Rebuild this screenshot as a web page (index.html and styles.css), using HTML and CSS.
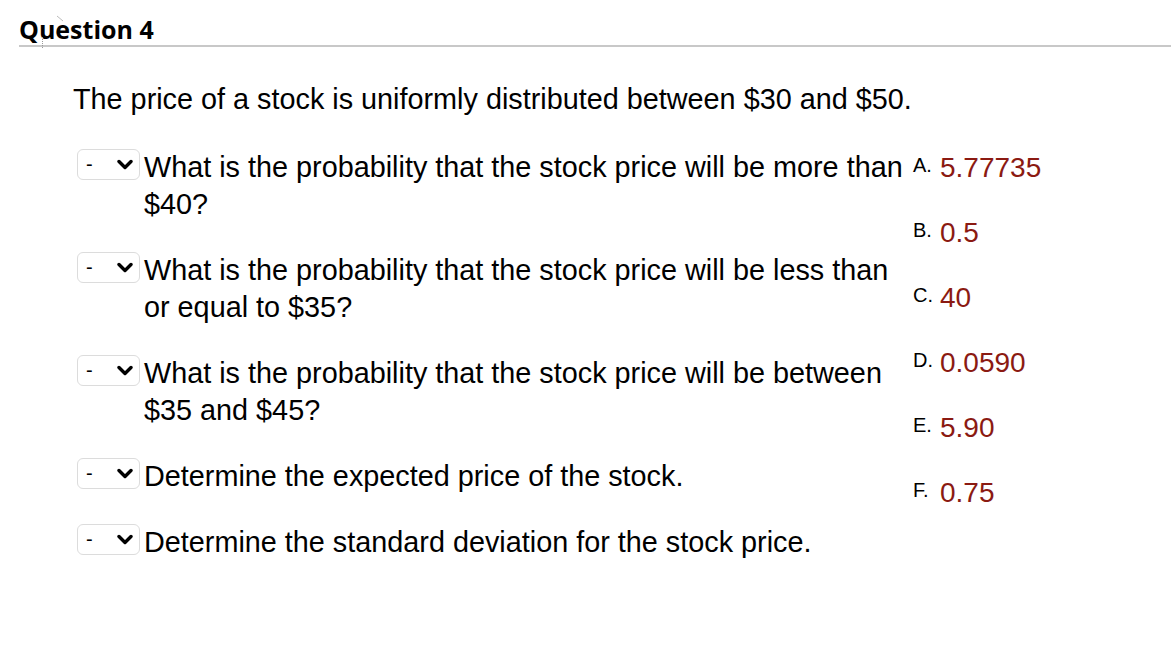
FILE: index.html
```html
<!DOCTYPE html>
<html>
<head>
<meta charset="utf-8">
<link rel="stylesheet" href="styles.css">
</head>
<body>
<div class="page">
  <h1 class="qtitle">Question 4<svg class="mark" width="30" height="34" viewBox="0 0 30 34"><line x1="16" y1="1" x2="22" y2="6" stroke="#bbb" stroke-width="1"/><line x1="1.5" y1="22" x2="1.5" y2="33" stroke="#999" stroke-width="1" stroke-dasharray="1,1"/></svg></h1>
  <div class="content">
    <p class="stem">The price of a stock is uniformly distributed between $30 and $50.</p>
    <div class="match">
      <div class="questions">
        <div class="qrow">
          <div class="sel"><span class="dash">-</span><svg class="chev" width="16" height="11" viewBox="0 0 16 11"><polyline points="2,2.5 8,8.5 14,2.5" fill="none" stroke="#000" stroke-width="3.4" stroke-linecap="round" stroke-linejoin="round"/></svg></div>
          <div class="qtext">What is the probability that the stock price will be more than $40?</div>
        </div>
        <div class="qrow">
          <div class="sel"><span class="dash">-</span><svg class="chev" width="16" height="11" viewBox="0 0 16 11"><polyline points="2,2.5 8,8.5 14,2.5" fill="none" stroke="#000" stroke-width="3.4" stroke-linecap="round" stroke-linejoin="round"/></svg></div>
          <div class="qtext">What is the probability that the stock price will be less than or equal to $35?</div>
        </div>
        <div class="qrow">
          <div class="sel"><span class="dash">-</span><svg class="chev" width="16" height="11" viewBox="0 0 16 11"><polyline points="2,2.5 8,8.5 14,2.5" fill="none" stroke="#000" stroke-width="3.4" stroke-linecap="round" stroke-linejoin="round"/></svg></div>
          <div class="qtext">What is the probability that the stock price will be between $35 and $45?</div>
        </div>
        <div class="qrow">
          <div class="sel"><span class="dash">-</span><svg class="chev" width="16" height="11" viewBox="0 0 16 11"><polyline points="2,2.5 8,8.5 14,2.5" fill="none" stroke="#000" stroke-width="3.4" stroke-linecap="round" stroke-linejoin="round"/></svg></div>
          <div class="qtext">Determine the expected price of the stock.</div>
        </div>
        <div class="qrow">
          <div class="sel"><span class="dash">-</span><svg class="chev" width="16" height="11" viewBox="0 0 16 11"><polyline points="2,2.5 8,8.5 14,2.5" fill="none" stroke="#000" stroke-width="3.4" stroke-linecap="round" stroke-linejoin="round"/></svg></div>
          <div class="qtext">Determine the standard deviation for the stock price.</div>
        </div>
      </div>
      <div class="options">
        <div class="opt"><span class="letter">A.</span><span class="val">5.77735</span></div>
        <div class="opt"><span class="letter">B.</span><span class="val">0.5</span></div>
        <div class="opt"><span class="letter">C.</span><span class="val">40</span></div>
        <div class="opt"><span class="letter">D.</span><span class="val">0.0590</span></div>
        <div class="opt"><span class="letter">E.</span><span class="val">5.90</span></div>
        <div class="opt"><span class="letter">F.</span><span class="val">0.75</span></div>
      </div>
    </div>
  </div>
</div>
</body>
</html>
```
FILE: styles.css
```css
html, body {
  margin: 0;
  padding: 0;
  background: #fff;
}
.page {
  padding: 14px 0 0 19px;
}
.qtitle {
  position: relative;
  margin: 0;
  font-family: "Open Sans", sans-serif;
  font-weight: 700;
  font-size: 25px;
  line-height: 30px;
  color: #000;
  border-bottom: 2px solid #c8c8c8;
  padding-bottom: 1px;
}
.mark {
  position: absolute;
  left: 22px;
  top: 1px;
}
.content {
  padding-left: 54px;
  font-family: "Liberation Sans", Arial, sans-serif;
  color: #000;
}
.stem {
  margin: 0;
  padding-top: 34px;
  font-size: 28.8px;
  line-height: 37px;
}
.match {
  display: flex;
  margin-top: 31px;
  margin-left: 4px;
}
.questions {
  display: flex;
  flex-direction: column;
  gap: 29px;
  width: 836px;
}
.qrow {
  display: flex;
  align-items: flex-start;
}
.sel {
  flex: none;
  box-sizing: border-box;
  width: 63px;
  height: 31px;
  border: 1px solid #dcdcdc;
  border-radius: 6px;
  display: flex;
  align-items: center;
  padding-left: 8px;
}
.dash {
  font-size: 20px;
  width: 31px;
}
.chev {
  display: block;
  flex: none;
}
.qtext {
  margin-left: 4px;
  width: 762px;
  font-size: 28.8px;
  line-height: 37px;
}
.options {
  display: flex;
  flex-direction: column;
}
.opt {
  height: 65px;
  display: flex;
  align-items: baseline;
  white-space: nowrap;
}
.letter {
  font-size: 20px;
  position: relative;
  top: -5px;
  width: 27px;
}
.val {
  font-size: 28px;
  line-height: 37px;
  color: #8b1a12;
}
```
